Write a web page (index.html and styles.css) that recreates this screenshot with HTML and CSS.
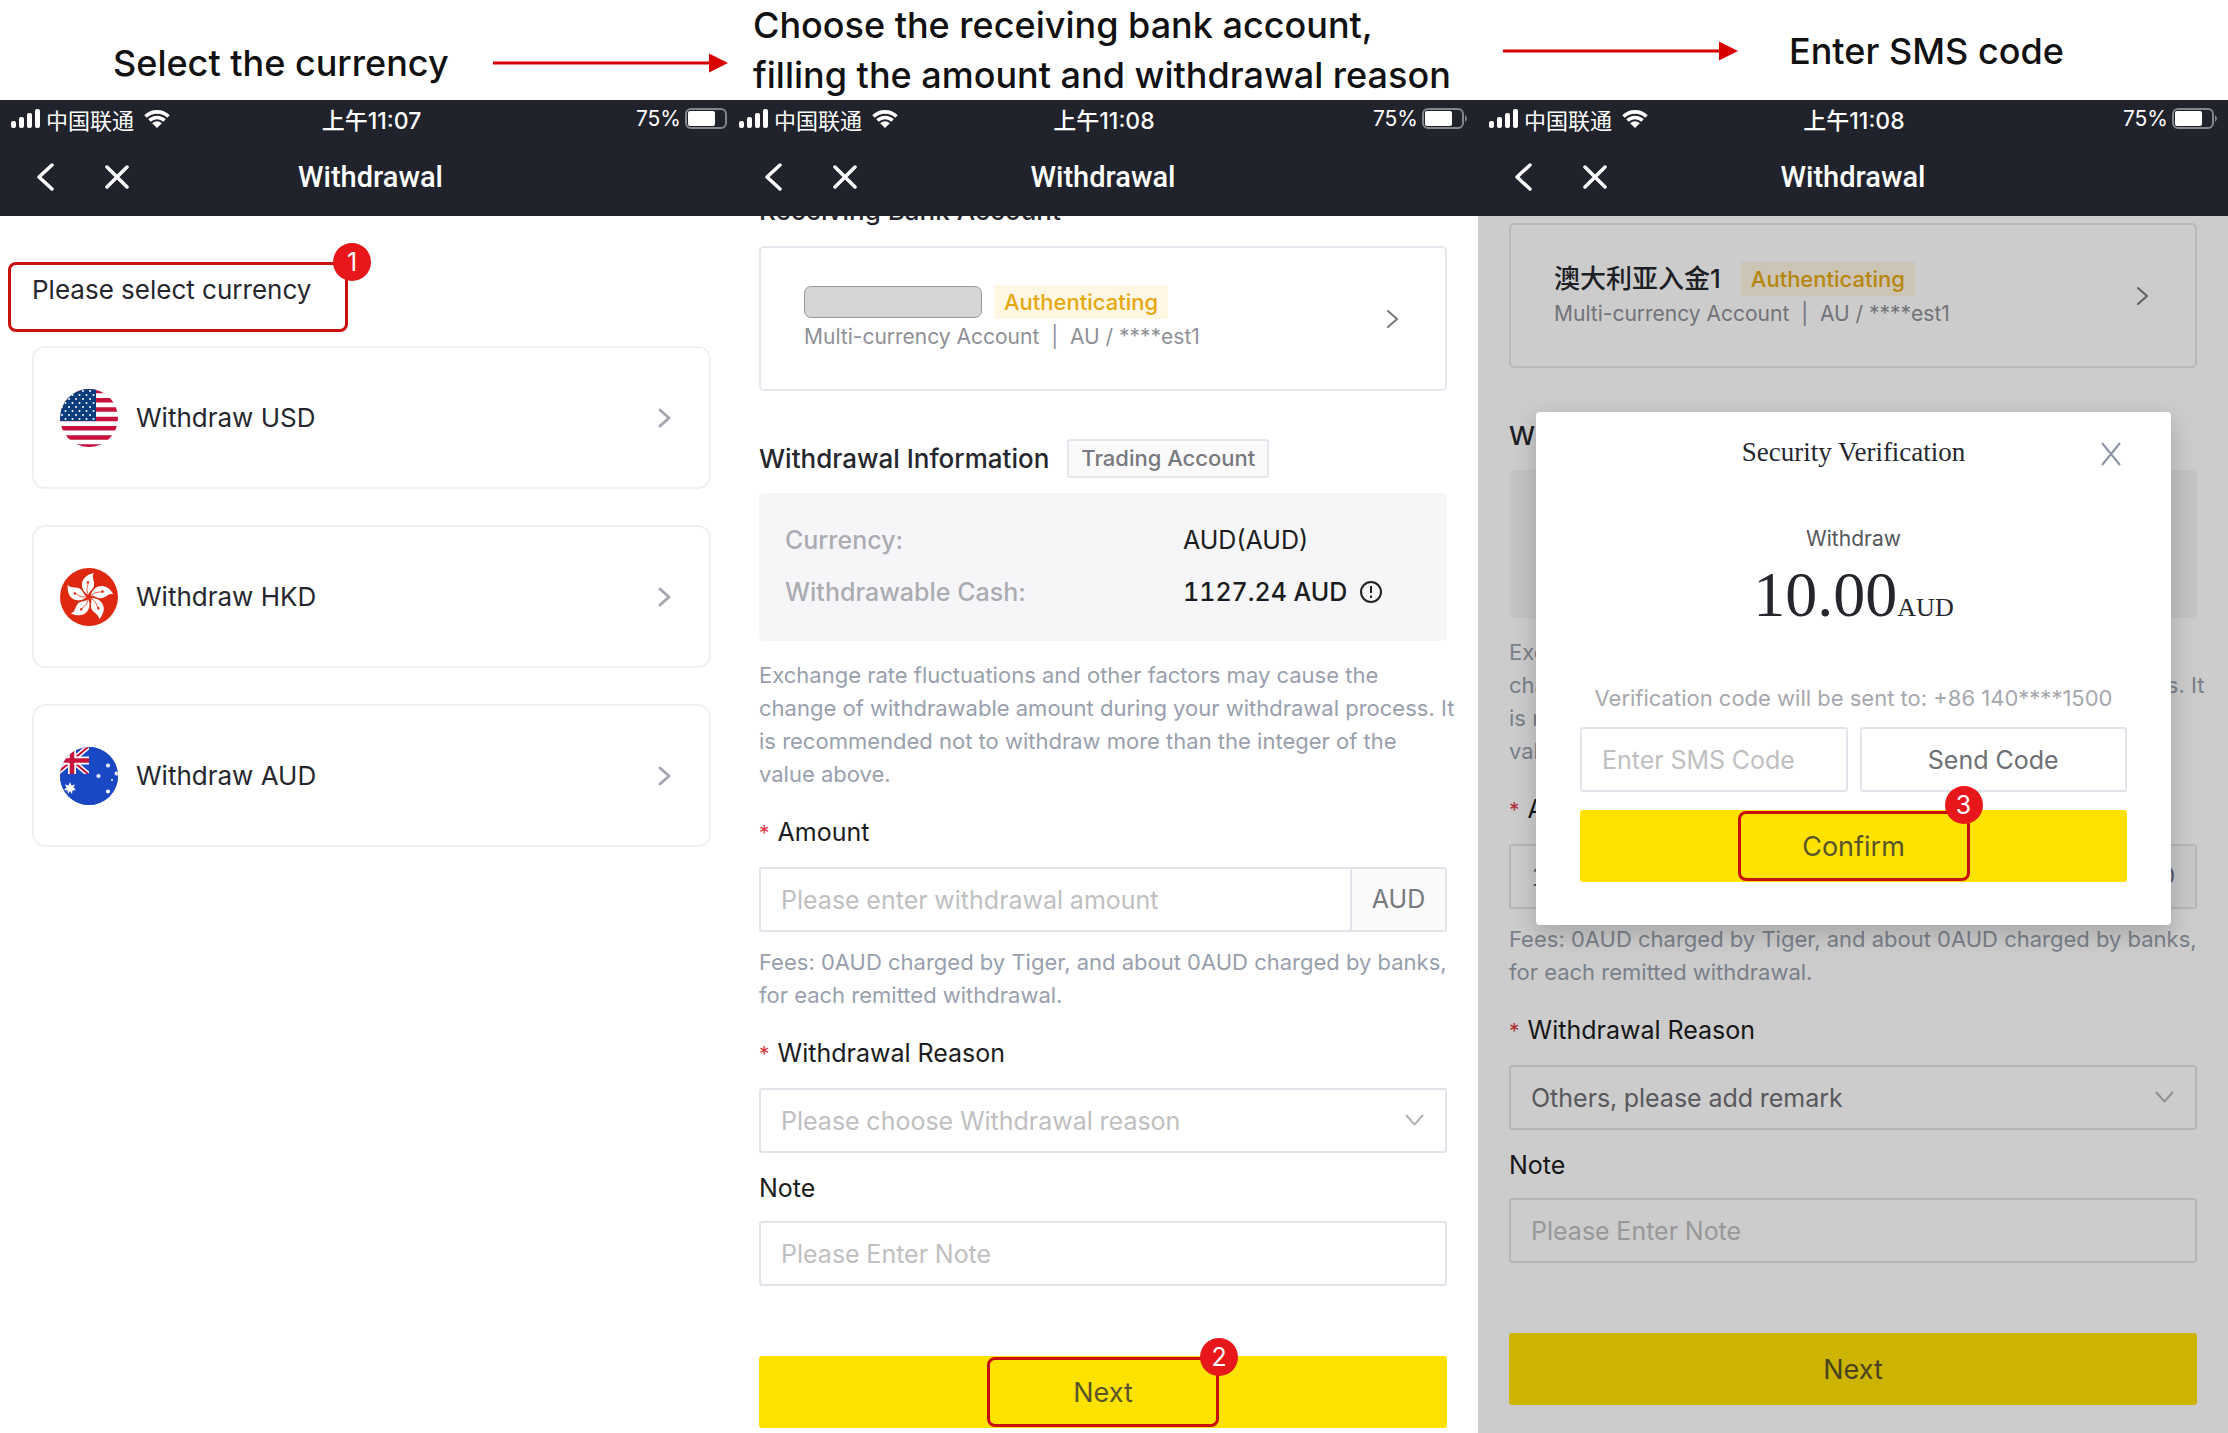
FILE: index.html
```html
<!DOCTYPE html>
<html lang="en">
<head>
    <meta charset="utf-8">
    <title>Withdrawal guide</title>
    <link rel="stylesheet" href="styles.css">
</head>
<body>
    <!-- shared icons -->
    <svg class="defs" width="0" height="0">
        <symbol id="signal" viewBox="0 0 30 20">
            <rect x="0" y="12" width="5" height="7" rx="2"/>
            <rect x="8" y="8" width="5" height="11" rx="2"/>
            <rect x="16" y="4" width="5" height="15" rx="2"/>
            <rect x="24" y="0" width="5" height="19" rx="2"/>
        </symbol>
        <symbol id="wifi" viewBox="0 0 26 20">
            <path d="M1.5 7.5a16.500 16.500 0 0 1 23 0M5.500 11.500a10.800 10.800 0 0 1 15 0" fill="none" stroke="#fff" stroke-width="3.600"/>
            <path d="M8.200 14.200a7 7 0 0 1 9.600 0L13 19z"/>
        </symbol>
        <symbol id="battery" viewBox="0 0 47 21">
            <rect x="1" y="1" width="40" height="19" rx="5" fill="none" stroke="#85868c" stroke-width="2"/>
            <rect x="3" y="3" width="27" height="15" rx="2"/>
            <path d="M43 7q4 3.500 0 7z" fill="#85868c"/>
        </symbol>
        <symbol id="back" viewBox="0 0 18 28">
            <path d="M16 2L3 14l13 12" fill="none" stroke="#fff" stroke-width="3.500" stroke-linecap="round" stroke-linejoin="round"/>
        </symbol>
        <symbol id="cross" viewBox="0 0 24 24">
            <path d="M2 2l20 20M22 2L2 22" fill="none" stroke="#fff" stroke-width="3.500" stroke-linecap="round"/>
        </symbol>
        <symbol id="thin-cross" viewBox="0 0 20 24">
            <path d="M1 1l18 22M19 1L1 23" fill="none" stroke="#8b93a5" stroke-width="2"/>
        </symbol>
        <symbol id="chevron" viewBox="0 0 13 20">
            <path d="M2 2l9 8-9 8" fill="none" stroke="currentColor" stroke-linecap="round" stroke-linejoin="round"/>
        </symbol>
        <symbol id="arrow" viewBox="0 0 235 20">
            <path d="M0 10h218" stroke="#d90000" stroke-width="3"/>
            <path d="M216 .5L235 10l-19 9.500z" fill="#d90000"/>
        </symbol>
        <symbol id="info" viewBox="0 0 24 24">
            <circle cx="12" cy="12" r="10" fill="none" stroke="#222" stroke-width="2"/>
            <path d="M12 6v7M12 15.500v2.500" stroke="#222" stroke-width="2"/>
        </symbol>
        <symbol id="petal" viewBox="0 0 58 58">
            <path d="M28.500 27C19 22 19 8 34 5c-3 4 1 8 0 13-1 4-5 5-5.500 9z" fill="#fff"/>
            <path d="M28.500 27c-2-4-2-7-.5-11" fill="none" stroke="#de2910" stroke-width=".7"/>
            <circle cx="28" cy="14.500" r="1.300" fill="#de2910"/>
        </symbol>
    </svg>

    <header class="steps">
        <div class="step step-first">
            <h2>Select the currency</h2>
            <svg class="arrow"><use href="#arrow"/></svg>
        </div>
        <div class="step step-second">
            <h2>Choose the receiving bank account,<br>filling the amount and withdrawal reason</h2>
        </div>
        <div class="step step-third">
            <svg class="arrow"><use href="#arrow"/></svg>
            <h2>Enter SMS code</h2>
        </div>
    </header>

    <main class="phones">
        <section class="phone phone-cut">
            <div class="topbar">
                <div class="status">
                    <span class="carrier"><svg class="signal"><use href="#signal"/></svg>中国联通<svg class="wifi"><use href="#wifi"/></svg></span>
                    <span class="time">上午11:07</span>
                    <span class="power">75%<svg class="battery"><use href="#battery"/></svg></span>
                </div>
                <div class="nav">
                    <span class="nav-buttons">
                        <button aria-label="Back"><svg class="back"><use href="#back"/></svg></button>
                        <button aria-label="Close"><svg class="close"><use href="#cross"/></svg></button>
                    </span>
                    <h1>Withdrawal</h1>
                </div>
            </div>
            <div class="screen currencies">
                <div class="pick">
                    <h3>Please select currency</h3>
                    <span class="badge">1</span>
                </div>
                <a class="currency" href="#usd">
                    <svg class="flag" viewBox="0 0 58 58">
                        <clipPath id="round"><circle cx="29" cy="29" r="29"/></clipPath>
                        <pattern id="stars" width="7" height="8" patternUnits="userSpaceOnUse">
                            <circle cx="2" cy="2" r="1" fill="#fff"/><circle cx="5.500" cy="6" r="1" fill="#fff"/>
                        </pattern>
                        <g clip-path="url(#round)">
                            <path fill="#fff" d="M0 0h58v58H0z"/>
                            <path stroke="#c8103c" stroke-width="4.500" d="M0 2h58M0 11.300h58M0 20.600h58M0 29.900h58M0 39.200h58M0 48.500h58M0 57.500h58"/>
                            <path fill="#0b3d7e" d="M0 0h36v32H0z"/>
                            <path fill="url(#stars)" d="M0 0h36v32H0z"/>
                        </g>
                    </svg>
                    <span>Withdraw USD</span>
                    <svg class="go"><use href="#chevron"/></svg>
                </a>
                <a class="currency" href="#hkd">
                    <svg class="flag" viewBox="0 0 58 58">
                        <circle cx="29" cy="29" r="29" fill="#de2910"/>
                        <use href="#petal"/>
                        <use href="#petal" transform="rotate(72 29 29)"/>
                        <use href="#petal" transform="rotate(144 29 29)"/>
                        <use href="#petal" transform="rotate(216 29 29)"/>
                        <use href="#petal" transform="rotate(288 29 29)"/>
                    </svg>
                    <span>Withdraw HKD</span>
                    <svg class="go"><use href="#chevron"/></svg>
                </a>
                <a class="currency" href="#aud">
                    <svg class="flag" viewBox="0 0 58 58">
                        <g clip-path="url(#round)">
                            <path fill="#1a47c4" d="M0 0h58v58H0z"/>
                            <path stroke="#fff" stroke-width="5" d="M-4 0l32 27M28 0L-4 27"/>
                            <path stroke="#c8103c" stroke-width="2" d="M-4 0l32 27M28 0L-4 27"/>
                            <path stroke="#fff" stroke-width="8" d="M12 0v27M0 13.500h29"/>
                            <path stroke="#c8103c" stroke-width="4.500" d="M12 0v27M0 13.500h29"/>
                            <path fill="#1a47c4" d="M29 0h29v58H29zM0 27h29v31H0z"/>
                            <path fill="#fff" d="M10 35l1.500 3.500 3.500-1-1.500 3 2.500 2.500-3.500.5-.5 3.500-2-3-2 3-.5-3.500L4 43l2.500-2.500-1.500-3 3.500 1z"/>
                            <g fill="#fff">
                                <circle cx="48" cy="18.500" r="2"/><circle cx="38.500" cy="29" r="2"/>
                                <circle cx="56.500" cy="26.500" r="2"/><circle cx="52" cy="33" r="1"/>
                                <circle cx="48" cy="44.500" r="2"/>
                            </g>
                        </g>
                    </svg>
                    <span>Withdraw AUD</span>
                    <svg class="go"><use href="#chevron"/></svg>
                </a>
            </div>
        </section>

        <section class="phone">
            <div class="topbar">
                <div class="status">
                    <span class="carrier"><svg class="signal"><use href="#signal"/></svg>中国联通<svg class="wifi"><use href="#wifi"/></svg></span>
                    <span class="time">上午11:08</span>
                    <span class="power">75%<svg class="battery"><use href="#battery"/></svg></span>
                </div>
                <div class="nav">
                    <span class="nav-buttons">
                        <button aria-label="Back"><svg class="back"><use href="#back"/></svg></button>
                        <button aria-label="Close"><svg class="close"><use href="#cross"/></svg></button>
                    </span>
                    <h1>Withdrawal</h1>
                </div>
            </div>
            <div class="screen">
                <form class="form">
                    <h3 class="bank-title">Receiving Bank Account</h3>
                    <a class="bank" href="#bank">
                        <span class="bank-text">
                            <span class="bank-name"><span class="redacted"></span><span class="tag-auth">Authenticating</span></span>
                            <span class="bank-number">Multi-currency Account&nbsp; |&nbsp; AU / ****est1</span>
                        </span>
                        <svg class="go"><use href="#chevron"/></svg>
                    </a>
                    <div class="info-title"><h3>Withdrawal Information</h3><span class="tag-account">Trading Account</span></div>
                    <dl class="info">
                        <dt>Currency:</dt><dd>AUD(AUD)</dd>
                        <dt>Withdrawable Cash:</dt><dd class="cash">1127.24 AUD <svg class="info-icon"><use href="#info"/></svg></dd>
                    </dl>
                    <p class="hint">Exchange rate fluctuations and other factors may cause the change of withdrawable amount during your withdrawal process. It is recommended not to withdraw more than the integer of the<br>value above.</p>
                    <label class="required" for="amount">Amount</label>
                    <div class="field amount">
                        <input id="amount" type="text" placeholder="Please enter withdrawal amount">
                        <span class="unit">AUD</span>
                    </div>
                    <p class="hint fees">Fees: 0AUD charged by Tiger, and about 0AUD charged by banks, for each remitted withdrawal.</p>
                    <label class="required" for="reason">Withdrawal Reason</label>
                    <div class="field select">
                        <select id="reason" class="empty"><option>Please choose Withdrawal reason</option></select>
                        <svg class="down"><use href="#chevron"/></svg>
                    </div>
                    <label class="note-label" for="note">Note</label>
                    <div class="field"><input id="note" type="text" placeholder="Please Enter Note"></div>
                    <div class="action">
                        <button class="primary" type="button">Next</button>
                        <span class="mark"><span class="badge">2</span></span>
                    </div>
                </form>
            </div>
        </section>

        <section class="phone">
            <div class="topbar">
                <div class="status">
                    <span class="carrier"><svg class="signal"><use href="#signal"/></svg>中国联通<svg class="wifi"><use href="#wifi"/></svg></span>
                    <span class="time">上午11:08</span>
                    <span class="power">75%<svg class="battery"><use href="#battery"/></svg></span>
                </div>
                <div class="nav">
                    <span class="nav-buttons">
                        <button aria-label="Back"><svg class="back"><use href="#back"/></svg></button>
                        <button aria-label="Close"><svg class="close"><use href="#cross"/></svg></button>
                    </span>
                    <h1>Withdrawal</h1>
                </div>
            </div>
            <div class="screen">
                <form class="form form-scrolled">
                    <a class="bank" href="#bank">
                        <span class="bank-text">
                            <span class="bank-name"><strong>澳大利亚入金1</strong><span class="tag-auth">Authenticating</span></span>
                            <span class="bank-number">Multi-currency Account&nbsp; |&nbsp; AU / ****est1</span>
                        </span>
                        <svg class="go"><use href="#chevron"/></svg>
                    </a>
                    <div class="info-title"><h3>Withdrawal Information</h3><span class="tag-account">Trading Account</span></div>
                    <dl class="info">
                        <dt>Currency:</dt><dd>AUD(AUD)</dd>
                        <dt>Withdrawable Cash:</dt><dd class="cash">1127.24 AUD <svg class="info-icon"><use href="#info"/></svg></dd>
                    </dl>
                    <p class="hint">Exchange rate fluctuations and other factors may cause the change of withdrawable amount during your withdrawal process. It is recommended not to withdraw more than the integer of the<br>value above.</p>
                    <label class="required" for="amount2">Amount</label>
                    <div class="field amount">
                        <input id="amount2" type="text" value="10">
                        <span class="unit">AUD</span>
                    </div>
                    <p class="hint fees">Fees: 0AUD charged by Tiger, and about 0AUD charged by banks, for each remitted withdrawal.</p>
                    <label class="required" for="reason2">Withdrawal Reason</label>
                    <div class="field select">
                        <select id="reason2"><option>Others, please add remark</option></select>
                        <svg class="down"><use href="#chevron"/></svg>
                    </div>
                    <label class="note-label" for="note2">Note</label>
                    <div class="field"><input id="note2" type="text" placeholder="Please Enter Note"></div>
                    <div class="action">
                        <button class="primary" type="button">Next</button>
                    </div>
                </form>
                <div class="overlay">
                    <div class="modal" role="dialog" aria-labelledby="modal-title">
                        <div class="modal-head">
                            <h3 id="modal-title">Security Verification</h3>
                            <button class="modal-close" aria-label="Close"><svg><use href="#thin-cross"/></svg></button>
                        </div>
                        <p class="modal-label">Withdraw</p>
                        <p class="modal-sum">10.00<small>AUD</small></p>
                        <label class="modal-sent" for="sms">Verification code will be sent to: +86 140****1500</label>
                        <div class="modal-code">
                            <div class="field"><input id="sms" type="text" placeholder="Enter SMS Code"></div>
                            <button class="send">Send Code</button>
                        </div>
                        <div class="action">
                            <button class="primary">Confirm</button>
                            <span class="mark"><span class="badge">3</span></span>
                        </div>
                    </div>
                </div>
            </div>
        </section>
    </main>
</body>
</html>
```
FILE: styles.css
```css
* {
    box-sizing: border-box;
}
body {
    margin: 0;
    min-height: 100vh;
    display: flex;
    flex-direction: column;
    background: #fff;
    color: #26272e;
    font-family: Inter, "Noto Sans CJK SC", sans-serif;
    font-size: 25px;
}
h1, h2, h3, p, dl, dd {
    margin: 0;
    font-weight: 500;
}
button, input, select {
    font: inherit;
    margin: 0;
    padding: 0;
    border: 0;
    background: none;
    border-radius: 0;
}
a {
    color: inherit;
    text-decoration: none;
}
.defs {
    position: absolute;
}
svg {
    display: block;
    flex-shrink: 0;
}

/* captions */
.steps, .phones {
    display: grid;
    grid-template-columns: 728fr 750fr 750fr;
}
.phones {
    flex: 1;
}
.step {
    display: flex;
    align-items: center;
    height: 100px;
    color: #111;
}
.step h2 {
    font-size: 36px;
    line-height: 50px;
    white-space: nowrap;
}
.step-first {
    justify-content: space-between;
    padding: 26px 0 0 113px;
}
.step-second {
    padding-left: 25px;
}
.step-third {
    gap: 51px;
    padding: 2px 0 0 25px;
}
.arrow {
    width: 235px;
    height: 20px;
}

/* phone */
.phone {
    display: flex;
    flex-direction: column;
    min-width: 0;
}
.topbar {
    height: 116px;
    overflow: hidden;
    background: #20222c;
    color: #fff;
    fill: #fff;
}
.status {
    display: grid;
    grid-template-columns: 1fr auto 1fr;
    align-items: center;
    height: 37px;
    padding: 0 9px 0 11px;
    font-size: 22px;
}
/* the first phone runs a little under its neighbour */
.phone-cut .status, .phone-cut .nav {
    margin-right: -13px;
}
.carrier, .power {
    display: flex;
    align-items: center;
}
.power {
    justify-content: flex-end;
    gap: 4px;
    font-size: 21px;
}
.time {
    font-size: 23px;
    font-weight: 500;
}
.signal {
    width: 30px;
    height: 20px;
    margin-right: 5px;
}
.wifi {
    width: 26px;
    height: 20px;
    margin-left: 10px;
}
.battery {
    width: 47px;
    height: 21px;
}
.nav {
    display: grid;
    grid-template-columns: 1fr auto 1fr;
    align-items: center;
    height: 79px;
    padding: 0 36px;
}
.nav-buttons {
    display: flex;
    align-items: center;
    gap: 51px;
}
.nav h1 {
    font-family: Roboto, sans-serif;
    font-size: 29px;
}
.back {
    width: 18px;
    height: 28px;
}
.close {
    width: 24px;
    height: 24px;
}
.screen {
    flex: 1;
    position: relative;
    overflow: hidden;
}

/* annotations */
.mark, .pick {
    border: 3px solid #c8100f;
    border-radius: 8px;
}
.mark {
    position: absolute;
    top: 1px;
    bottom: 1px;
    left: 50%;
    width: 232px;
    margin-left: -116px;
    pointer-events: none;
}
.badge {
    position: absolute;
    top: -22px;
    right: -22px;
    width: 38px;
    height: 38px;
    border-radius: 50%;
    background: #e8171b;
    color: #fff;
    font-size: 25px;
    line-height: 38px;
    text-align: center;
}
.pick .badge {
    right: -26px;
}
.modal .badge {
    top: -28px;
    right: -16px;
}

/* currency list */
.currencies {
    padding: 46px 17px 0 32px;
}
.pick {
    position: relative;
    width: 340px;
    height: 70px;
    margin: 0 0 14px -24px;
    padding: 9px 0 0 21px;
}
.pick h3 {
    font-size: 26px;
    line-height: 32px;
    font-weight: 400;
    white-space: nowrap;
}
.currency {
    display: flex;
    align-items: center;
    height: 143px;
    margin-bottom: 36px;
    padding: 0 38px 0 26px;
    border: 2px solid #eef0f2;
    border-radius: 13px;
    font-size: 26px;
}
.flag {
    width: 58px;
    height: 58px;
    margin-right: 18px;
}
.go {
    width: 13px;
    height: 20px;
    margin-left: auto;
    color: #77787d;
    stroke-width: 2px;
}
.currency .go {
    color: #a5a8b2;
    stroke-width: 3px;
}

/* withdrawal form */
.form {
    padding: 0 31px 6px;
    margin-top: -21px;
}
.form-scrolled {
    margin-top: 7px;
}
.bank-title {
    font-size: 26px;
    line-height: 32px;
    margin-bottom: 19px;
}
.bank {
    display: flex;
    align-items: center;
    height: 145px;
    padding: 0 46px 0 43px;
    border: 2px solid #e6e7ee;
    border-radius: 5px;
}
.bank-text {
    display: flex;
    flex-direction: column;
    gap: 3px;
}
.bank-name {
    display: flex;
    align-items: center;
    gap: 12px;
}
.bank-name strong {
    margin-right: 8px;
    font-size: 26px;
    line-height: 34px;
    font-weight: 500;
}
.redacted {
    width: 178px;
    height: 32px;
    border: 1px solid #999;
    border-radius: 7px;
    background: #d6d6d6;
}
.tag-auth {
    padding: 0 10px;
    background: #fff7e3;
    color: #e6a80f;
    font-size: 22px;
    line-height: 34px;
    font-weight: 500;
}
.bank-number {
    color: #8e9097;
    font-size: 21px;
    line-height: 30px;
}
.info-title {
    display: flex;
    align-items: center;
    gap: 18px;
    margin: 48px 0 15px;
}
.info-title h3 {
    font-size: 26px;
    line-height: 32px;
}
.tag-account {
    padding: 0 12px;
    border: 2px solid #e6e7ee;
    border-radius: 3px;
    background: #fafafb;
    color: #77787d;
    font-size: 22px;
    line-height: 35px;
    font-weight: 500;
}
.info {
    display: grid;
    grid-template-columns: 398px 1fr;
    align-content: center;
    height: 148px;
    padding: 0 0 2px 26px;
    border-radius: 5px;
    background: #f6f6f9;
    line-height: 52px;
}
.info dt {
    color: #abacb2;
}
.info dd {
    color: #1b1c20;
    font-weight: 400;
}
.info .cash {
    display: flex;
    align-items: center;
    gap: 12px;
    font-weight: 500;
    font-variant-numeric: tabular-nums;
}
.info-icon {
    width: 24px;
    height: 24px;
}
.hint {
    margin: 18px -14px 25px 0;
    color: #98a0ad;
    font-size: 22px;
    line-height: 33px;
    font-weight: 400;
}
label {
    display: block;
    color: #1b1c20;
    line-height: 32px;
    margin-bottom: 17px;
}
.required::before {
    content: "*";
    margin-right: 8px;
    color: #d9363e;
    font-size: 21px;
}
.field {
    position: relative;
    display: flex;
    height: 65px;
    border: 2px solid #e3e4eb;
    border-radius: 3px;
}
.field input, .field select {
    flex: 1;
    width: 100%;
    min-width: 0;
    padding: 0 20px;
    color: #6e6f74;
    font-variant-numeric: tabular-nums;
}
.field select {
    appearance: none;
}
.field .empty, .field input::placeholder {
    color: #bfbfc1;
    opacity: 1;
}
.unit {
    width: 95px;
    border-left: 2px solid #e3e4eb;
    background: #fafafb;
    color: #77787d;
    line-height: 61px;
    text-align: center;
}
.fees {
    margin-top: 14px;
}
.down {
    position: absolute;
    top: 20px;
    right: 24px;
    width: 13px;
    height: 20px;
    color: #b5b5b8;
    stroke-width: 2px;
    transform: rotate(90deg);
}
.note-label {
    margin-top: 19px;
}
.action {
    position: relative;
}
.form .action {
    margin-top: 70px;
}
.primary {
    display: block;
    width: 100%;
    height: 72px;
    border-radius: 3px;
    background: #ffe200;
    color: #5a5528;
    font-size: 27px;
}

/* sms dialog */
.overlay {
    position: absolute;
    inset: 0;
    padding: 196px 57px 0 58px;
    background: rgba(0, 0, 0, .2);
}
.modal {
    height: 513px;
    padding: 0 44px;
    border-radius: 4px;
    background: #fff;
    box-shadow: 0 8px 24px rgba(0, 0, 0, .2);
    text-align: center;
}
.modal-head {
    position: relative;
    padding-top: 24px;
}
.modal-head h3 {
    font-family: "Liberation Serif", serif;
    font-size: 27px;
    line-height: 32px;
    font-weight: 400;
}
.modal-close {
    position: absolute;
    top: 30px;
    right: 6px;
}
.modal-close svg {
    width: 20px;
    height: 24px;
}
.modal-label {
    margin-top: 55px;
    color: #55565c;
    font-size: 21px;
    line-height: 32px;
    font-weight: 400;
}
.modal-sum {
    font-family: "Liberation Serif", serif;
    font-size: 64px;
    line-height: 80px;
    font-weight: 400;
}
.modal-sum small {
    font-size: 26px;
}
.modal-sent {
    margin: 34px 0 13px;
    color: #a6a8ae;
    font-size: 22px;
}
.modal-code {
    display: grid;
    grid-template-columns: 1fr 1fr;
    gap: 12px;
    margin-bottom: 18px;
}
.send {
    border: 2px solid #e3e4eb;
    border-radius: 3px;
    color: #6e6f74;
}
```
